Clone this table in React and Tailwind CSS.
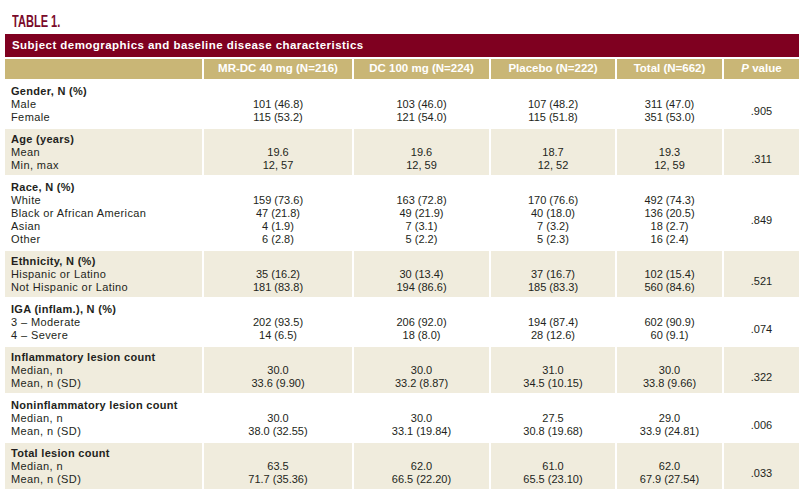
import React from "react";

const columns = [
  "MR-DC 40 mg (N=216)",
  "DC 100 mg (N=224)",
  "Placebo (N=222)",
  "Total (N=662)",
];

const sections = [
  {
    title: "Gender, N (%)",
    rows: [
      ["Male", "101 (46.8)", "103 (46.0)", "107 (48.2)", "311 (47.0)"],
      ["Female", "115 (53.2)", "121 (54.0)", "115 (51.8)", "351 (53.0)"],
    ],
    p: ".905",
  },
  {
    title: "Age (years)",
    rows: [
      ["Mean", "19.6", "19.6", "18.7", "19.3"],
      ["Min, max", "12, 57", "12, 59", "12, 52", "12, 59"],
    ],
    p: ".311",
  },
  {
    title: "Race, N (%)",
    rows: [
      ["White", "159 (73.6)", "163 (72.8)", "170 (76.6)", "492 (74.3)"],
      ["Black or African American", "47 (21.8)", "49 (21.9)", "40 (18.0)", "136 (20.5)"],
      ["Asian", "4 (1.9)", "7 (3.1)", "7 (3.2)", "18 (2.7)"],
      ["Other", "6 (2.8)", "5 (2.2)", "5 (2.3)", "16 (2.4)"],
    ],
    p: ".849",
  },
  {
    title: "Ethnicity, N (%)",
    rows: [
      ["Hispanic or Latino", "35 (16.2)", "30 (13.4)", "37 (16.7)", "102 (15.4)"],
      ["Not Hispanic or Latino", "181 (83.8)", "194 (86.6)", "185 (83.3)", "560 (84.6)"],
    ],
    p: ".521",
  },
  {
    title: "IGA (inflam.), N (%)",
    rows: [
      ["3 – Moderate", "202 (93.5)", "206 (92.0)", "194 (87.4)", "602 (90.9)"],
      ["4 – Severe", "14 (6.5)", "18 (8.0)", "28 (12.6)", "60 (9.1)"],
    ],
    p: ".074",
  },
  {
    title: "Inflammatory lesion count",
    rows: [
      ["Median, n", "30.0", "30.0", "31.0", "30.0"],
      ["Mean, n (SD)", "33.6 (9.90)", "33.2 (8.87)", "34.5 (10.15)", "33.8 (9.66)"],
    ],
    p: ".322",
  },
  {
    title: "Noninflammatory lesion count",
    rows: [
      ["Median, n", "30.0", "30.0", "27.5", "29.0"],
      ["Mean, n (SD)", "38.0 (32.55)", "33.1 (19.84)", "30.8 (19.68)", "33.9 (24.81)"],
    ],
    p: ".006",
  },
  {
    title: "Total lesion count",
    rows: [
      ["Median, n", "63.5", "62.0", "61.0", "62.0"],
      ["Mean, n (SD)", "71.7 (35.36)", "66.5 (22.20)", "65.5 (23.10)", "67.9 (27.54)"],
    ],
    p: ".033",
  },
];

const Section = ({ section, shaded }) => {
  const bg = shaded ? "bg-[#f0ecdd]" : "bg-white";
  return (
    <>
      {/* Label column */}
      <div className={`${bg} pl-[6px] pt-[4px] pb-[3px] leading-[13px] tracking-[0.4px]`}>
        <div className="font-bold tracking-[0.3px]">{section.title}</div>
        {section.rows.map((r) => (
          <div key={r[0]}>{r[0]}</div>
        ))}
      </div>

      {/* Arm columns */}
      {[1, 2, 3, 4].map((c) => (
        <div key={c} className={`${bg} pt-[4px] pb-[3px] leading-[13px] text-center`}>
          <div className="h-[13px]" />
          {section.rows.map((r) => (
            <div key={r[0]}>{r[c]}</div>
          ))}
        </div>
      ))}

      {/* P value */}
      <div className={`${bg} pt-[4px] pb-[3px] leading-[13px] flex flex-col`}>
        <div className="h-[13px]" />
        <div className="flex-1 flex items-center justify-center">{section.p}</div>
      </div>
    </>
  );
}

export default function App() {
  return (
    <div className="w-[805px] h-[496px] bg-white text-[#231f20] font-['Liberation_Sans',Arial,sans-serif] text-[11px]">
      {/* Caption */}
      <div className="h-[34px] pt-[13px] pl-[12px]">
        <div className="origin-left scale-x-[0.65] text-[17px] leading-[17px] font-bold text-[#7a0a2a] whitespace-nowrap">
          TABLE 1.
        </div>
      </div>

      <div className="ml-[5px] w-[794px]">
        {/* Title banner */}
        <div className="bg-[#7f0020] h-[23px] flex items-center pl-[7px] text-white font-bold text-[11.5px] tracking-[0.45px]">
          Subject demographics and baseline disease characteristics
        </div>

        <div className="mt-[2px] grid grid-cols-[197px_148px_135px_124px_105px_75px] gap-[2px]">
          {/* Header row */}
          <div className="bg-[#c9b676] h-[20px]" />
          {columns.map((c) => (
            <div
              key={c}
              className="bg-[#c9b676] h-[20px] flex items-center justify-center text-white font-bold text-[11.5px]"
            >
              {c}
            </div>
          ))}
          <div className="bg-[#c9b676] h-[20px] flex items-center justify-center text-white font-bold text-[11.5px]">
            <span className="italic">P</span>&nbsp;value
          </div>

          {sections.map((s, i) => (
            <Section key={s.title} section={s} shaded={i % 2 === 1} />
          ))}
        </div>
      </div>
    </div>
  );
}
